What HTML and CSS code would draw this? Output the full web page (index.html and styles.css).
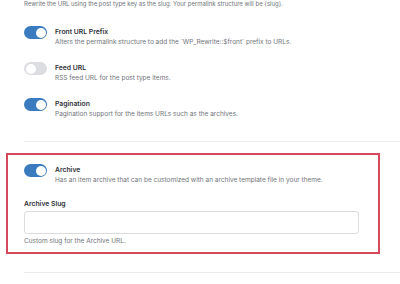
FILE: index.html
```html
<!DOCTYPE html>
<html lang="en">

<head>
    <meta charset="utf-8">
    <meta name="viewport" content="width=device-width, initial-scale=1.0">
    <title>Permalinks</title>
    <link rel="stylesheet" href="styles.css">
</head>

<body>
    <section class="panel">
        <p class="intro">Rewrite the URL using the post type key as the slug. Your permalink structure will be {slug}.</p>

        <div class="option">
            <span class="toggle on"></span>
            <div class="option-text">
                <h3>Front URL Prefix</h3>
                <p>Alters the permalink structure to add the `WP_Rewrite::$front` prefix to URLs.</p>
            </div>
        </div>

        <div class="option">
            <span class="toggle"></span>
            <div class="option-text">
                <h3>Feed URL</h3>
                <p>RSS feed URL for the post type items.</p>
            </div>
        </div>

        <div class="option">
            <span class="toggle on"></span>
            <div class="option-text">
                <h3>Pagination</h3>
                <p>Pagination support for the items URLs such as the archives.</p>
            </div>
        </div>
    </section>

    <section class="highlight">
        <div class="option">
            <span class="toggle on"></span>
            <div class="option-text">
                <h3>Archive</h3>
                <p>Has an item archive that can be customized with an archive template file in your theme.</p>
            </div>
        </div>

        <label class="field-label" for="archive-slug">Archive Slug</label>
        <input type="text" id="archive-slug" class="field">
        <p class="help">Custom slug for the Archive URL.</p>
    </section>

    <hr class="divider">
</body></html>
```

FILE: styles.css
```css
* {
    margin: 0px;
    box-sizing: border-box;
}

body {
    background-color: #fff;
    font-family: Inter, "Liberation Sans", sans-serif;
    font-size: 6.5px;
    line-height: 11px;
    color: #70747a;
}

.panel {
    margin-left: 24px;
    margin-top: -2px;
    padding-bottom: 21px;
    border-bottom: 1px solid #ededed;
}

.intro {
    font-size: 6px;
    margin-bottom: 17px;
}

.option {
    display: flex;
    gap: 8px;
    margin-bottom: 14px;
}

.panel .option:last-child {
    margin-bottom: 0px;
}

.option-text h3 {
    font-size: 6.8px;
    font-weight: 600;
    color: #2f3237;
}

.toggle {
    position: relative;
    flex: none;
    width: 23px;
    height: 13px;
    border-radius: 7px;
    background-color: #dcdde0;
}

.toggle::after {
    content: "";
    position: absolute;
    top: 1.5px;
    left: 1.5px;
    width: 10px;
    height: 10px;
    border-radius: 50%;
    background-color: #fff;
}

.toggle.on {
    background-color: #3a7bbf;
}

.toggle.on::after {
    left: 11.5px;
}

.highlight {
    width: 374px;
    margin-left: 6px;
    margin-top: 11px;
    padding: 9px 19px 5px 16px;
    border: 2px solid #d6495c;
}

.highlight .option {
    margin-bottom: 12px;
}

.field-label {
    display: block;
    font-size: 6.8px;
    font-weight: 600;
    color: #2f3237;
}

.field {
    display: block;
    width: 100%;
    height: 23px;
    margin-top: 2px;
    border: 1px solid #dcdcde;
    border-radius: 3px;
    background-color: #fff;
}

.help {
    margin-top: 2px;
}

.divider {
    margin: 18px 0 0 24px;
    border: none;
    border-top: 1px solid #ededed;
}
```
